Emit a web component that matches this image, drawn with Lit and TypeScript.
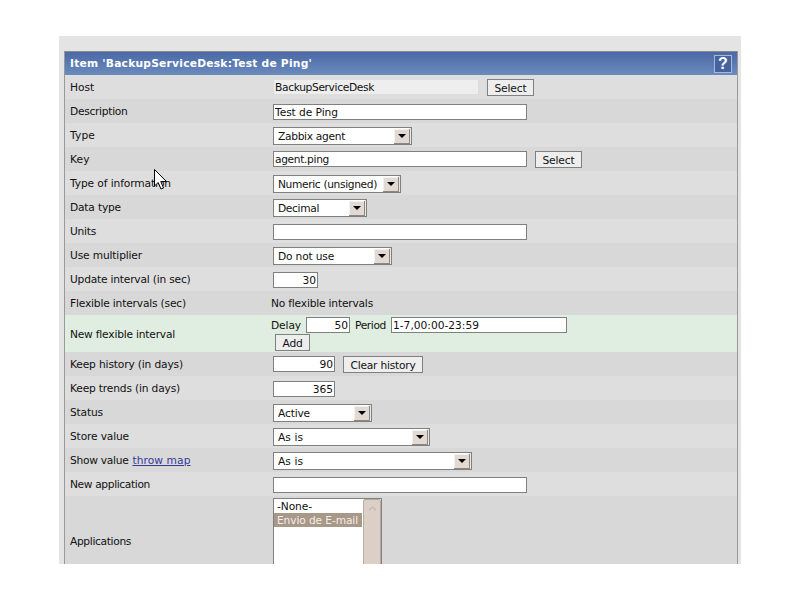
import { LitElement, html, css } from "lit";
import { customElement } from "lit/decorators.js";

const ctx = document.createElement("canvas").getContext("2d")!;

/** Letter-spacing that makes a text occupy the given ink width. */
function fit(text: string, width: number, font = '10.67px "DejaVu Sans"') {
  ctx.font = font;
  const natural = ctx.measureText(text).width;
  return `letter-spacing:${((width + 1 - natural) / text.length).toFixed(3)}px`;
}

@customElement("app-root")
export class AppRoot extends LitElement {
  static styles = css`
    :host { display: block; width: 800px; height: 600px; background: #fff; position: relative; overflow: hidden;
      font-family: "DejaVu Sans", sans-serif; font-size: 10.67px; color: #111; }
    .panel { box-sizing: border-box; margin: 36px 0 0 59px; width: 682px; height: 528px; background: #e4e4e4;
      padding: 15px 3px 0 5px; overflow: hidden; }
    .table { border: 1px solid #999; border-top-color: #8a8a8a; border-bottom: 0; }
    .head { height: 23px; box-sizing: border-box; background: linear-gradient(#4a69a6, #6b8bbd); color: #fff; font-weight: bold;
      padding: 0 5px; display: flex; align-items: center; justify-content: space-between; }
    .help { box-sizing: border-box; width: 18px; height: 18px; border: 1px solid #a9b8d4; background: #46639f; color: #fff;
      font: bold 16px/16px "Liberation Sans", sans-serif; text-align: center; }
    .row { display: flex; height: 24px; background: #dedede; }
    .row.alt { background: #d8d8d8; }
    .row.new { background: #dfeee0; height: 37px; }
    .row.new .label { padding-top: 1px; }
    .row.apps { height: 90px; background: #d8d8d8; }
    .label { width: 205px; box-sizing: border-box; padding-left: 5px; display: flex; align-items: center; flex: none; gap: 4px; }
    .label a { color: #39399a; text-decoration: underline; }
    .field { flex: 1; display: flex; align-items: flex-start; padding: 5px 0 0 3px; }
    .field.top { padding-top: 4px; }
    .field.plain { padding: 0 0 0 1px; align-items: center; }
    .field.stack { flex-direction: column; padding: 2px 0 0 1px; }
    .field.apps { padding-top: 2px; }
    .line { display: flex; align-items: center; }
    .delay { width: 35px; }
    .period { width: 41px; box-sizing: border-box; padding-left: 5px; }
    input { box-sizing: border-box; height: 16px; border: 1px solid #808080; background: #fff; padding: 0 1px; margin: 0;
      font: inherit; color: inherit; outline: none; display: block; }
    input.w254 { width: 254px; }
    input.ro { width: 206px; background: #eee; border-color: #ddd; }
    input.num { width: 62px; text-align: right; }
    input.w44 { width: 44px; text-align: right; }
    input.w45 { width: 45px; text-align: right; }
    input.w176 { width: 176px; }
    button { box-sizing: border-box; height: 17px; border: 1px solid #808080; background: #eee; font: inherit; color: inherit; padding: 1px 0 0;
      margin: 0; display: block; }
    .b47 { width: 47px; margin-left: 8px; }
    .b80 { width: 80px; margin-left: 8px; }
    .b35 { width: 35px; margin: 1px 0 0 4px; }
    .sel { box-sizing: border-box; height: 18px; border: 1px solid #808080; background: #fff; display: flex; align-items: flex-start;
      padding: 0 0 0 4px; justify-content: space-between; line-height: 17px; box-shadow: inset -2px 0 0 #e8e8e8; }
    .arrow { box-sizing: border-box; width: 16px; height: 15px; margin: 1px 1px 0 0; background: #e2dad2; border-right: 1px solid #8c8780;
      border-bottom: 1px solid #8c8780; box-shadow: inset 1px 1px 0 #f4f0ec; display: flex; align-items: center; justify-content: center; flex: none; }
    .arrow i { width: 0; height: 0; border: 4px solid transparent; border-top: 4px solid #000; border-bottom: 0; }
    .list { box-sizing: border-box; width: 109px; height: 88px; border: 1px solid #808080; background: #fff; display: flex; }
    .opts { width: 88px; flex: none; }
    .opt { height: 14px; line-height: 15px; padding-left: 3px; }
    .opt.on { background: #a89888; color: #f2eeea; }
    .bar { margin-left: 1px; flex: 1; background: #dcd0c6; border: 1px solid #b8aca0; border-radius: 2px; height: 86px; box-sizing: border-box; }
    .bar svg { display: block; margin: 6px auto 0; }
    .cursor { position: absolute; left: 153px; top: 168px; }
  `;

  private label(text: string, w: number) {
    return html`<div class="label"><span style=${fit(text, w)}>${text}</span></div>`;
  }

  private sel(text: string, w: number, tw: number) {
    return html`<div class="field top"><div class="sel" style="width:${w}px"><span style=${fit(text, tw)}>${text}</span><span class="arrow"><i></i></span></div></div>`;
  }

  private btn(text: string, cls: string, tw: number) {
    return html`<button class=${cls} style=${fit(text, tw)}>${text}</button>`;
  }

  render() {
    return html`
      <div class="panel">
        <div class="table">
          <div class="head"><span style=${fit("Item 'BackupServiceDesk:Test de Ping'", 241, 'bold 10.67px "DejaVu Sans"')}>Item 'BackupServiceDesk:Test de Ping'</span><span class="help">?</span></div>
          <div class="row">${this.label("Host", 23)}<div class="field top"><input class="ro" style=${fit("BackupServiceDesk", 98)} value="BackupServiceDesk" readonly />${this.btn("Select", "b47", 31)}</div></div>
          <div class="row alt">${this.label("Description", 56.5)}<div class="field"><input class="w254" style=${fit("Test de Ping", 62)} value="Test de Ping" /></div></div>
          <div class="row">${this.label("Type", 24)}${this.sel("Zabbix agent", 139, 66)}</div>
          <div class="row alt">${this.label("Key", 18.5)}<div class="field top"><input class="w254" style=${fit("agent.ping", 53)} value="agent.ping" />${this.btn("Select", "b47", 31)}</div></div>
          <div class="row">${this.label("Type of information", 100)}${this.sel("Numeric (unsigned)", 128, 98)}</div>
          <div class="row alt">${this.label("Data type", 50)}${this.sel("Decimal", 94, 40)}</div>
          <div class="row">${this.label("Units", 25)}<div class="field"><input class="w254" /></div></div>
          <div class="row alt">${this.label("Use multiplier", 71)}${this.sel("Do not use", 119, 55)}</div>
          <div class="row">${this.label("Update interval (in sec)", 119.5)}<div class="field"><input class="w45" value="30" /></div></div>
          <div class="row alt">${this.label("Flexible intervals (sec)", 115)}<div class="field plain"><span style=${fit("No flexible intervals", 101)}>No flexible intervals</span></div></div>
          <div class="row new">${this.label("New flexible interval", 104)}
            <div class="field stack">
              <div class="line"><span class="delay" style=${fit("Delay", 29)}>Delay</span><input class="w44" value="50" /><span class="period" style=${fit("Period", 30)}>Period</span><input class="w176" style=${fit("1-7,00:00-23:59", 85)} value="1-7,00:00-23:59" /></div>
              ${this.btn("Add", "b35", 19)}
            </div>
          </div>
          <div class="row alt">${this.label("Keep history (in days)", 112)}<div class="field top"><input class="num" value="90" />${this.btn("Clear history", "b80", 64)}</div></div>
          <div class="row">${this.label("Keep trends (in days)", 109)}<div class="field"><input class="num" value="365" /></div></div>
          <div class="row alt">${this.label("Status", 32)}${this.sel("Active", 99, 31)}</div>
          <div class="row">${this.label("Store value", 58)}${this.sel("As is", 157, 24)}</div>
          <div class="row alt"><div class="label"><span style=${fit("Show value", 57.5)}>Show value</span><a href="#" style=${fit("throw map", 57)}>throw map</a></div>${this.sel("As is", 199, 24)}</div>
          <div class="row">${this.label("New application", 79)}<div class="field"><input class="w254" /></div></div>
          <div class="row apps">${this.label("Applications", 60)}
            <div class="field apps">
              <div class="list">
                <div class="opts"><div class="opt" style=${fit("-None-", 34)}>-None-</div><div class="opt on" style=${fit("Envio de E-mail", 80)}>Envio de E-mail</div></div>
                <div class="bar"><svg width="9" height="5" viewBox="0 0 9 5"><path d="M1 4 L4.5 1 L8 4" fill="none" stroke="#b8aca0" stroke-width="1"/></svg></div>
              </div>
            </div>
          </div>
        </div>
      </div>
      <svg class="cursor" width="15" height="23" viewBox="0 0 15 23"><path d="M1.5 1.5 L1.5 18 L5.2 14.5 L8 21 L10.5 20 L7.8 13.5 L13.5 13.5 Z" fill="#fff" stroke="#000" stroke-width="1"/></svg>
    `;
  }
}
